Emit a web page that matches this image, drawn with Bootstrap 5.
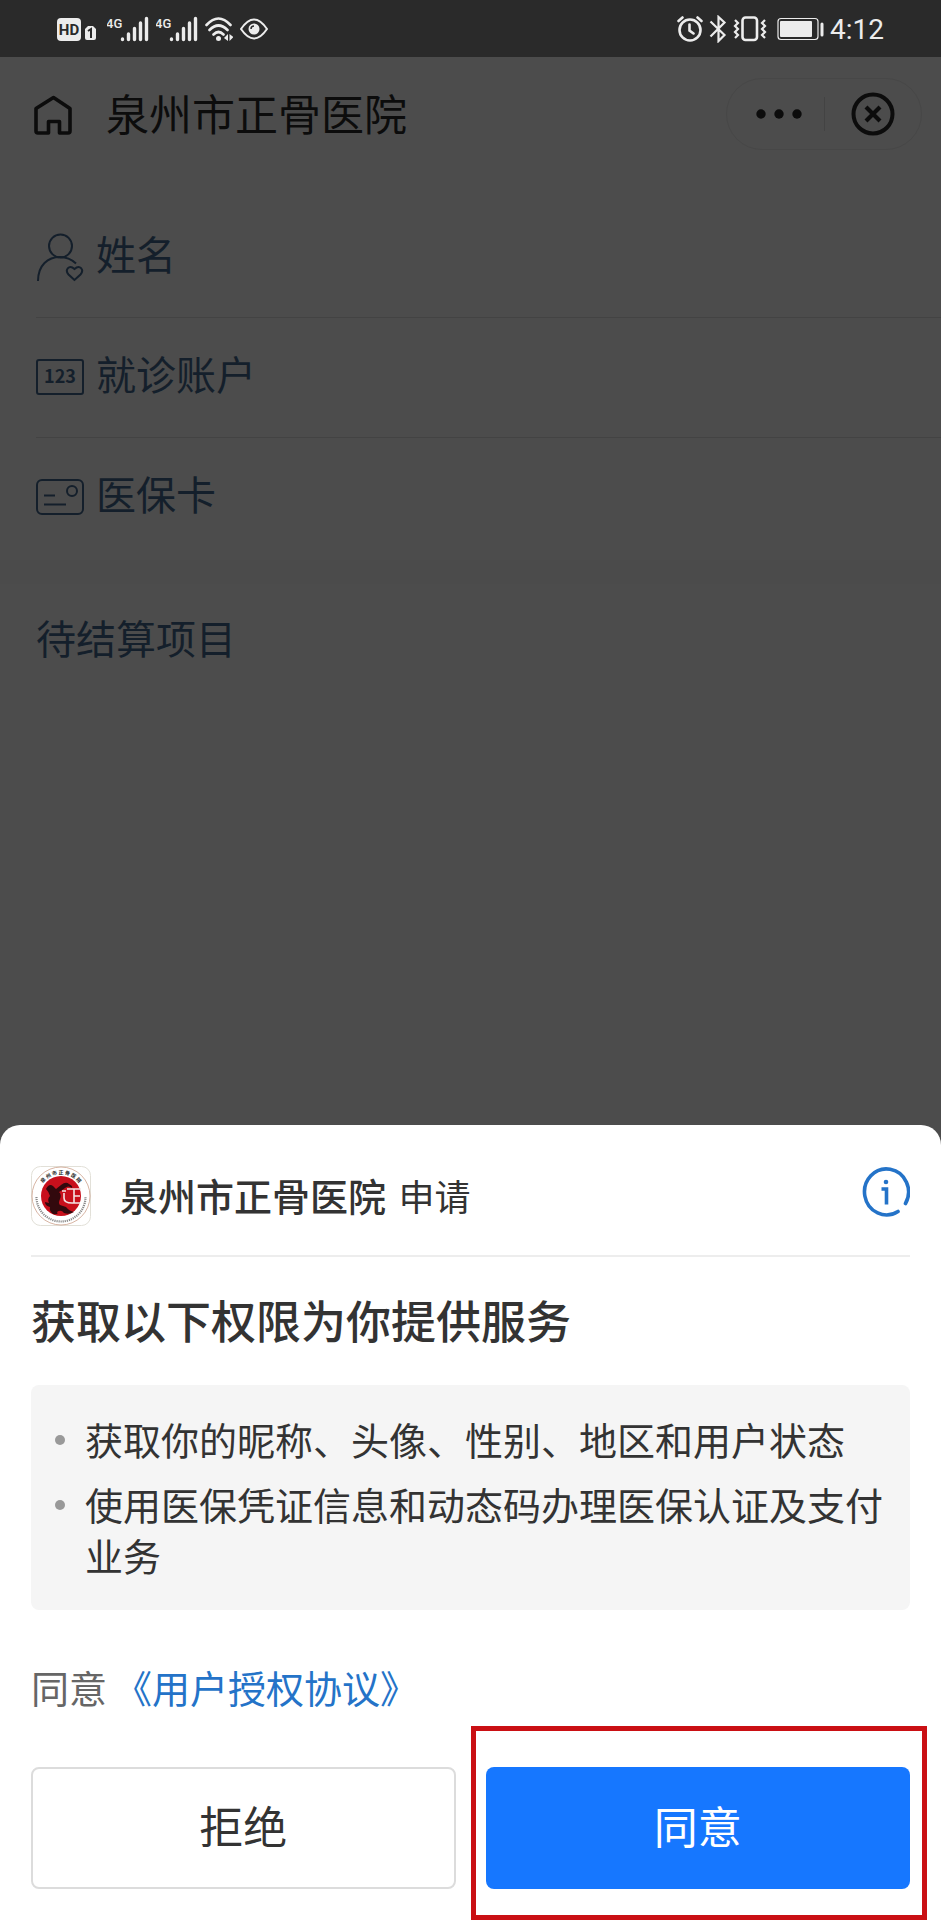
<!DOCTYPE html>
<html lang="zh-CN">
<head>
<meta charset="utf-8">
<meta name="viewport" content="width=device-width, initial-scale=1">
<title>泉州市正骨医院</title>
<link href="https://cdn.jsdelivr.net/npm/bootstrap@5.3.0/dist/css/bootstrap.min.css" rel="stylesheet">
<style>
  body { background: #4c4c4c; font-family: "Noto Sans CJK SC", sans-serif; color: #333; }
  svg { display: block; flex: none; }
  .status-bar { background: #2a2a2a; color: #ececec; height: 57px; padding: 0 57px 0 56px; }
  .status-icons { gap: 7px; }
  .status-icons.status-right { gap: 6px; }
  .clock { font: 28px/36px Roboto, sans-serif; padding-top: 2px; }
  .app-head { height: 114px; padding: 0 19px 0 33px; color: #0c0c0c; }
  .app-title { font-size: 43px; line-height: 60px; margin: 0 0 0 33px; padding-bottom: 4px; font-weight: 400; }
  .plain { background: none; border: 0; padding: 0; color: inherit; }
  .capsule { border: 1px solid #474747; border-radius: 36px; width: 196px; height: 72px; }
  .capsule .plain { flex: 1; display: flex; justify-content: center; }
  .capsule .split { width: 1px; height: 34px; background: #434343; }
  .info-list { margin: 27px 0 0 36px; color: #141f2b; }
  .info-row { height: 120px; gap: 12px; font-size: 40px; line-height: 60px; border-bottom: 1px solid #434343; }
  .info-row:last-child { border-bottom: 0; }
  .info-row span { padding-bottom: 10px; }
  .info-row svg { margin-bottom: 2px; }
  .band { height: 24px; background: #4b4b4b; margin-top: 2px; }
  .pending { color: #141f2b; font-size: 40px; line-height: 60px; font-weight: 400; margin: 0; padding: 23px 36px 0; }
  .sheet { background: #fff; border-radius: 20px 20px 0 0; padding: 0 31px 31px; color: #333; }
  .sheet-head { height: 132px; padding-top: 12px; border-bottom: 2px solid #ededed; }
  .who { font-size: 38px; line-height: 56px; margin-left: 29px; padding-bottom: 3px; }
  .who strong { font-weight: 500; }
  .who span { font-size: 36px; margin-left: 4px; }
  .ask { font-size: 45px; line-height: 64px; font-weight: 500; margin: 31px 0 33px; }
  .scopes { background: #f5f5f5; border-radius: 8px; padding: 28px 16px 30px 24px; margin: 0; list-style: none; font-size: 38px; line-height: 51px; }
  .scopes li { position: relative; padding-left: 30px; }
  .scopes li + li { margin-top: 14px; }
  .scopes li::before { content: ""; position: absolute; left: 0; top: 22px; width: 10px; height: 10px; border-radius: 50%; background: #999; }
  .terms { font-size: 38px; line-height: 56px; color: #666; margin: 49px 0 52px; gap: 7px; }
  .terms a { color: #2473c8; text-decoration: none; }
  .actions { gap: 30px; }
  .action { flex: 1 1 0; position: relative; }
  .action .btn { width: 100%; height: 122px; font-size: 44px; line-height: 60px; border-radius: 8px; padding: 0 0 6px; }
  .btn-deny { border: 2px solid #dcdcdc; color: #333; background: #fff; }
  .btn-allow { background: #1677ff; color: #fff; border: 0; }
  .marker { position: absolute; inset: -41px -17px -31px -15px; border: 5px solid #ca1014; pointer-events: none; }
</style>
</head>
<body class="d-flex flex-column min-vh-100">

<div class="status-bar d-flex align-items-center justify-content-between">
  <div class="status-icons d-flex align-items-center">
    <svg width="40" height="26" viewBox="56 16 40 26" fill="currentColor"><rect x="57" y="18" width="24" height="23" rx="4"/><text x="69" y="35" font-family="Roboto" font-size="15" font-weight="700" text-anchor="middle" fill="#2a2a2a">HD</text><path d="M88 26h5l3 3v9a2 2 0 0 1-2 2h-7a2 2 0 0 1-2-2v-9z"/><path d="M88 31l3-2v9" stroke="#2a2a2a" stroke-width="2" fill="none"/></svg>
    <svg class="ms-1" width="42" height="26" viewBox="105 16 42 26" fill="none" stroke="currentColor" stroke-width="3.4" stroke-linecap="round"><text x="104" y="28" font-family="Roboto" font-size="13" font-weight="500" fill="currentColor" stroke="none">4G</text><path d="M120.500 39v.5M126.500 34v5.500M132.500 28.500v11M138.500 23v16.500M144.500 18.500v21"/></svg>
    <svg width="42" height="26" viewBox="154 16 42 26" fill="none" stroke="currentColor" stroke-width="3.400" stroke-linecap="round"><text x="153" y="28" font-family="Roboto" font-size="13" font-weight="500" fill="currentColor" stroke="none">4G</text><path d="M169.500 39v.5M175.500 34v5.500M181.500 28.500v11M187.500 23v16.500M193.500 18.500v21"/></svg>
    <svg width="28" height="26" viewBox="202 16 28 26" fill="none" stroke="currentColor" stroke-width="2.600" stroke-linecap="round"><path d="M203.500 25q12-13 24 0M206.500 30q9-9 18 0M210.500 34.500q5-5 10 0"/><circle cx="215.500" cy="38.500" r="2.500" fill="currentColor" stroke="none"/><path d="M225 34v7l-4-3zM226.500 34v7l4-4z" fill="currentColor" stroke="none"/></svg>
    <svg width="28" height="26" viewBox="238 16 28 26" fill="none" stroke="currentColor" stroke-width="2"><path d="M239 29q13-19 26 0q-13 19-26 0z"/><circle cx="252" cy="29" r="5.500" fill="currentColor" stroke="none"/><path d="M249 29a3 3 0 0 1 3-3" stroke="#2a2a2a" stroke-width="1.500"/></svg>
  </div>
  <div class="status-icons status-right d-flex align-items-center">
    <svg width="26" height="28" viewBox="676 15 26 28" fill="none" stroke="currentColor" stroke-width="2.600" stroke-linecap="round"><circle cx="689" cy="30" r="10.500"/><path d="M688.500 24.500v6l4 3M677.500 21l4-3.500M700.500 21l-4-3.500"/></svg>
    <svg width="18" height="28" viewBox="709 15 18 28" fill="none" stroke="currentColor" stroke-width="2.200"><path d="M710.500 21.500l14 13.500-6 6V17l6 5.500-14 14"/></svg>
    <svg width="34" height="28" viewBox="734 15 34 28" fill="none" stroke="currentColor" stroke-width="2.600"><rect x="743.500" y="17.500" width="14.500" height="22.500" rx="3"/><path d="M736 20l3 3-3 3 3 3-3 3 3 3-3 3M766 20l-3 3 3 3-3 3 3 3-3 3 3 3" stroke-width="2.200"/></svg>
    <svg class="ms-1" width="47" height="24" viewBox="778 17 47 24" fill="none" stroke="currentColor"><rect x="779" y="18.500" width="40" height="21" rx="3" stroke-width="1.200"/><rect x="781" y="21" width="32" height="16" rx="1" fill="currentColor" stroke="none"/><path d="M823 24v11" stroke-width="3" stroke-linecap="round"/></svg>
    <span class="clock">4:12</span>
  </div>
</div>

<header class="app-head d-flex align-items-center">
  <button type="button" class="plain" aria-label="首页"><svg width="40" height="42" viewBox="33 93 40 42" fill="none" stroke="currentColor" stroke-width="3.600" stroke-linejoin="round"><path d="M36 108.500L53.500 97.500 70 108.500V131a2 2 0 0 1-2 2H59.500V121.500H48.500V133H38a2 2 0 0 1-2-2z"/></svg></button>
  <h1 class="app-title">泉州市正骨医院</h1>
  <div class="capsule d-flex align-items-center ms-auto">
    <button type="button" class="plain" aria-label="更多"><svg class="ms-2" width="46" height="10" viewBox="0 0 46 10" fill="currentColor"><circle cx="5" cy="5" r="4.700"/><circle cx="23" cy="5" r="4.700"/><circle cx="41" cy="5" r="4.700"/></svg></button>
    <span class="split"></span>
    <button type="button" class="plain" aria-label="关闭"><svg width="44" height="44" viewBox="-22 -22 44 44" fill="none" stroke="currentColor" stroke-width="4"><circle r="19.500"/><path d="M-7-7L7 7M7-7L-7 7" stroke-width="4.200"/></svg></button>
  </div>
</header>

<main>
  <div class="info-list">
    <div class="info-row d-flex align-items-center">
      <svg width="48" height="50" viewBox="36 231 48 50" fill="none" stroke="currentColor" stroke-width="2"><circle cx="60.500" cy="245" r="11.500"/><path d="M38 280C38 264 48 256 60 256Q69 256 76 262.500"/><path d="M74.500 279L68.500 273.500C64.500 269 69 263 74.500 268C80 263 84.500 269 80.500 273.500Z"/></svg>
      <span>姓名</span>
    </div>
    <div class="info-row d-flex align-items-center">
      <svg width="48" height="38" viewBox="36 359 48 38" fill="none" stroke="currentColor" stroke-width="2"><rect x="37" y="361" width="46" height="34" rx="2"/><text x="60" y="384" font-family="Noto Sans CJK SC" font-size="18" font-weight="700" text-anchor="middle" fill="currentColor" stroke="none">123</text></svg>
      <span>就诊账户</span>
    </div>
    <div class="info-row d-flex align-items-center">
      <svg width="48" height="38" viewBox="36 478 48 38" fill="none" stroke="currentColor" stroke-width="2"><rect x="37" y="480" width="46" height="34" rx="5"/><circle cx="72" cy="491" r="5"/><path d="M44 495.500h11M44 504.500h22"/></svg>
      <span>医保卡</span>
    </div>
  </div>
  <div class="band"></div>
  <h2 class="pending">待结算项目</h2>
</main>

<section class="sheet mt-auto" role="dialog" aria-labelledby="ask">
  <div class="sheet-head d-flex align-items-center">
    <svg width="60" height="60" viewBox="0 0 60 60">
      <defs><path id="arcTop" d="M8 30a22 22 0 0 1 44 0"/></defs>
      <rect x=".5" y=".5" width="59" height="59" rx="9" fill="#fff" stroke="#e2e0d8"/>
      <circle cx="30" cy="30" r="29" fill="#fff" stroke="#cda18c" stroke-width=".8"/>
      <circle cx="30" cy="30" r="20" fill="#c8101c"/>
      <path d="M15 23q3-6 7-3l3 3 5-4q5-4 8-1q4 2 3 4q-4-3-7 0q-4 3-6 4q3 3 1 7q-2 4 0 6l6 2q3 4 8 5q-5 3-10 1q-3-4-7-1q2 3-4 2q-4-3-3-7q-5-1-5-5l4 1q-2-4 1-7q-1-4-4-7z" fill="#32090d"/>
      <path d="M33 27v5q0 5 8 5h8M31 25h4M36 23h14M43 23v14M43 30h6" fill="none" stroke="#f4e4e4" stroke-width="1.600"/>
      <text font-family="Noto Sans CJK SC" font-size="5" font-weight="700" fill="#222"><textPath href="#arcTop" startOffset="50%" text-anchor="middle">泉 州 市 正 骨 医 院</textPath></text>
      <path d="M5.500 31a24.500 24.500 0 0 0 49 0" fill="none" stroke="#8a8a8a" stroke-width="2.200" stroke-dasharray="1.200 .9"/>
    </svg>
    <div class="who"><strong>泉州市正骨医院</strong> <span>申请</span></div>
    <button type="button" class="plain ms-auto mb-2" aria-label="说明"><svg width="48" height="52" viewBox="-24 -26 48 52" fill="none" stroke="#2473c8" stroke-width="3.600" stroke-linecap="round"><path d="M12 19.500A22 23 0 1 1 19.500 11.500"/><circle cy="-10" r="2.300" fill="#2473c8" stroke="none"/><path d="M-4.500-3H.5V12.500" stroke-linecap="butt"/></svg></button>
  </div>
  <h2 class="ask" id="ask">获取以下权限为你提供服务</h2>
  <ul class="scopes">
    <li>获取你的昵称、头像、性别、地区和用户状态</li>
    <li>使用医保凭证信息和动态码办理医保认证及支付业务</li>
  </ul>
  <div class="terms d-flex"><span>同意</span><a href="#">《用户授权协议》</a></div>
  <div class="actions d-flex">
    <div class="action"><button type="button" class="btn btn-deny">拒绝</button></div>
    <div class="action"><button type="button" class="btn btn-allow">同意</button><span class="marker"></span></div>
  </div>
</section>

<script src="https://cdn.jsdelivr.net/npm/bootstrap@5.3.0/dist/js/bootstrap.bundle.min.js"></script>
</body>
</html>
